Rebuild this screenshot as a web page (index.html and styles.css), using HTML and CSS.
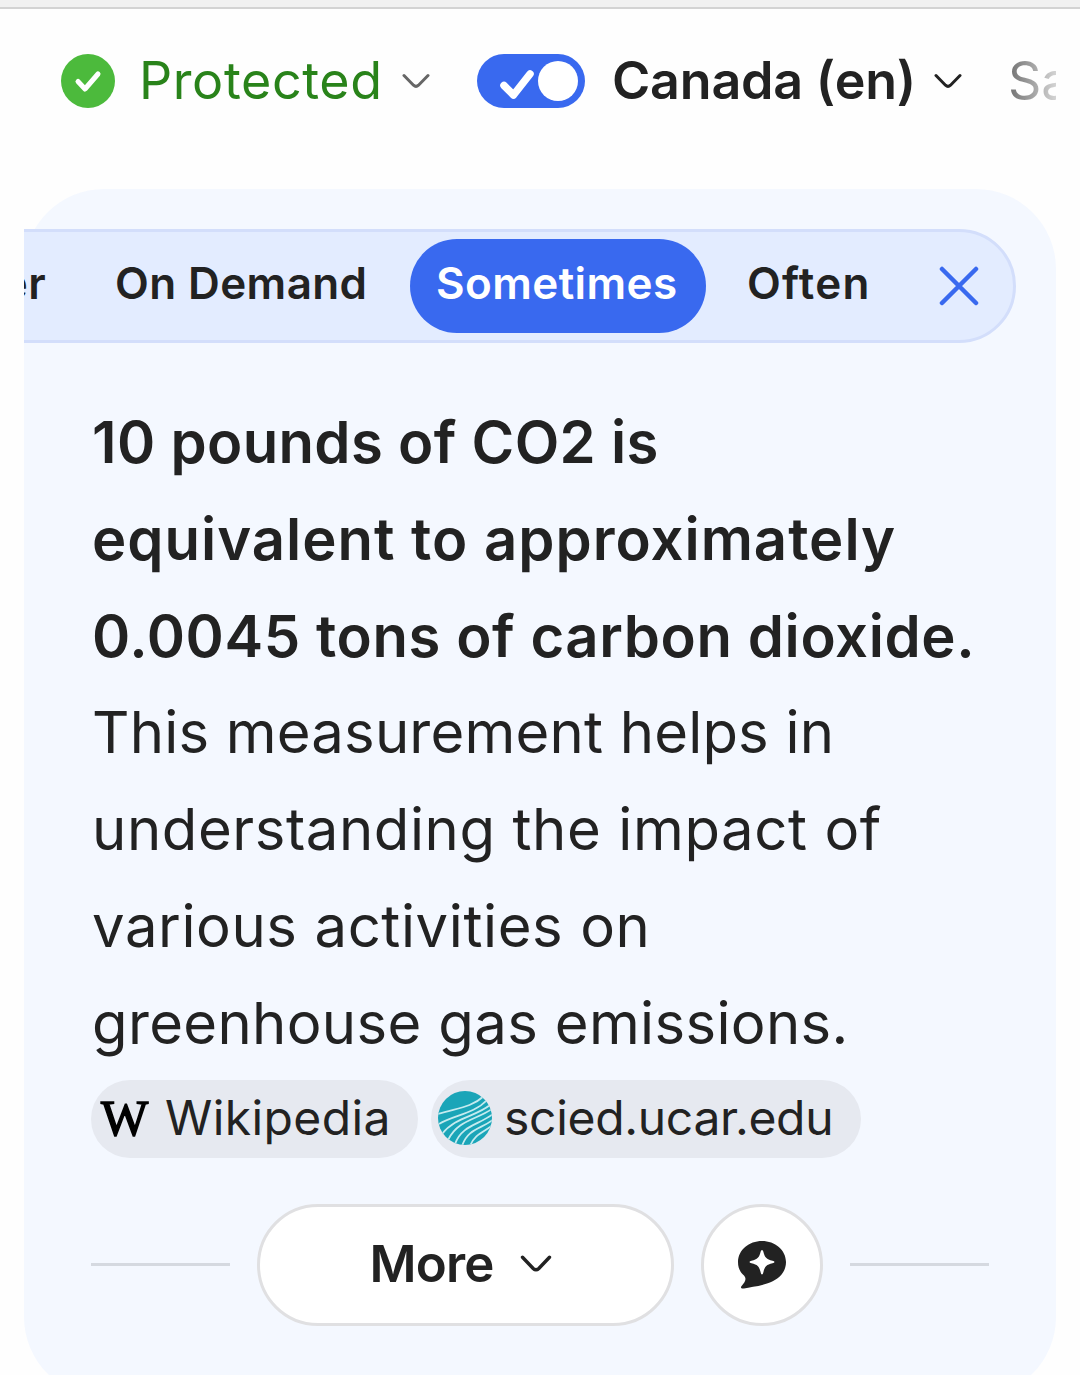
FILE: index.html
```html
<!DOCTYPE html>
<html lang="en-CA">
<head>
    <meta charset="UTF-8">
    <meta name="viewport" content="width=device-width, initial-scale=1.0">
    <title>10 pounds of CO2 in tons</title>
    <link rel="stylesheet" href="styles.css">
</head>
<body>

    <div class="topbar"></div>

    <!-- Search filters -->
    <nav class="filters">
        <svg class="shield" viewBox="0 0 54 54">
            <circle cx="27" cy="27" r="27" fill="#4cba3c"/>
            <path d="M17 27.500l7 7.500L37 20" fill="none" stroke="#fff" stroke-width="5" stroke-linecap="round" stroke-linejoin="round"/>
        </svg>
        <span class="protected">Protected</span>
        <svg class="chevron grey" viewBox="0 0 28 16"><path d="M2 2.500l9.500 9.700q2.500 2.300 5 0L26 2.500"/></svg>
        <svg class="toggle" viewBox="0 0 108 54">
            <rect width="108" height="54" rx="27" fill="#3969ef"/>
            <path d="M27 31.500l9.500 9.500L53 20" fill="none" stroke="#fff" stroke-width="7.500" stroke-linecap="round" stroke-linejoin="round"/>
            <circle cx="81" cy="27" r="23" fill="#3969ef"/>
            <circle cx="81" cy="27" r="20" fill="#fff"/>
        </svg>
        <span class="region">Canada (en)</span>
        <svg class="chevron" viewBox="0 0 28 16"><path d="M2 2.500l9.500 9.700q2.500 2.300 5 0L26 2.500"/></svg>
        <span class="safe">Safe search</span>
    </nav>

    <!-- Search Assist -->
    <main class="card">
        <div class="scroller">
            <div class="tabs">
                <span class="tab never">Never</span>
                <span class="tab demand">On Demand</span>
                <span class="tab active">Sometimes</span>
                <span class="tab often">Often</span>
                <svg class="close" viewBox="0 0 40 40"><path d="M3 3l34 34M37 3L3 37"/></svg>
            </div>
        </div>

        <p class="answer">
            <b>10 pounds of CO2 is</b><br>
            <b class="wider">equivalent to approximately</b><br>
            <b class="wide">0.0045 tons of carbon dioxide.</b><br>
            <span class="tight">This measurement helps in</span><br>
            <span class="wide">understanding the impact of</span><br>
            <span class="wide">various activities on</span><br>
            <span>greenhouse gas emissions.</span>
        </p>

        <div class="sources">
            <a class="source wiki"><span class="wiki-icon">W</span><span>Wikipedia</span></a>
            <a class="source ucar">
                <svg class="ucar-icon" viewBox="0 0 54 54">
                    <clipPath id="disc"><circle cx="27" cy="27" r="27"/></clipPath>
                    <g clip-path="url(#disc)">
                        <rect width="54" height="54" fill="#1aa5b8"/>
                        <g fill="none" stroke="#c5ebef" stroke-width="1.800">
                            <path d="M0 23C18 17 33 17 46 5"/>
                            <path d="M1 33C16 24 36 23 49 9"/>
                            <path d="M4 43C17 26 37 26 52 14"/>
                            <path d="M10 49C20 29 38 29 54 18"/>
                            <path d="M17 53C24 34 41 34 55 23"/>
                            <path d="M24 55C30 37 44 38 56 28"/>
                            <path d="M32 55C37 42 47 41 56 33"/>
                        </g>
                    </g>
                </svg>
                <span>scied.ucar.edu</span>
            </a>
        </div>

        <div class="actions">
            <span class="line"></span>
            <button class="more">
                <span>More</span>
                <svg class="chevron" viewBox="0 0 28 16"><path d="M2 2l9.500 10q2.500 2.500 5 0L26 2"/></svg>
            </button>
            <button class="chat">
                <svg viewBox="0 0 48 48">
                    <path fill="#222" d="M24 0C37 0 48 9 48 21C48 32 40 39 29 42.500C20 45.500 12 46 6 47.500C3 48 2 46.500 4 44.500C7 41 9 38 6 34.500C2 31 0 27 0 21C0 9 11 0 24 0Z"/>
                    <path fill="#fff" d="M24 9q1 0 1.300 1.500c1.400 6 3.200 7.800 9.200 9.200q2 .4 2 1.300t-2 1.300c-6 1.400-7.800 3.200-9.200 9.200q-.3 2-1.300 2t-1.300-2c-1.400-6-3.200-7.800-9.200-9.200q-2-.4-2-1.300t2-1.300c6-1.400 7.800-3.200 9.200-9.200Q23 9 24 9z"/>
                </svg>
            </button>
            <span class="line"></span>
        </div>
    </main>

</body>
</html>
```

FILE: styles.css
```css
* {
    box-sizing: border-box;
}
body {
    margin: 0;
    height: 1375px;
    overflow: hidden;
    background-color: #fefefe;
    color: #222;
    font-family: Inter, "Liberation Sans", sans-serif;
}
svg {
    display: block;
    flex: none;
}
.topbar {
    height: 9px;
    background-color: #f1f1f1;
    border-bottom: 2px solid #d3d3d3;
}
.filters {
    display: flex;
    align-items: center;
    height: 144px;
    margin: 0 24px 36px;
    padding-left: 37px;
    overflow: hidden;
    font-size: 52px;
    white-space: nowrap;
}
.filters span {
    flex: none;
    line-height: 60px;
}
.shield {
    width: 54px;
    height: 54px;
}
.protected {
    width: 263px;
    padding-left: 24px;
    color: #29831a;
    letter-spacing: 0.6px;
}
.chevron {
    width: 28px;
    height: 16px;
    fill: none;
    stroke: #222;
    stroke-width: 3;
    stroke-linecap: round;
}
.filters .chevron {
    margin-left: 24px;
}
.filters .grey {
    stroke: #666;
}
.toggle {
    width: 108px;
    height: 54px;
    margin-left: 47px;
}
.region {
    width: 298px;
    margin-left: 27px;
    font-weight: 600;
    letter-spacing: -0.2px;
}
.safe {
    margin-left: 46px;
    color: transparent;
    background: linear-gradient(90deg, #707070, #d8d8d8 50px);
    background-clip: text;
    -webkit-background-clip: text;
}
.card {
    height: 1208px;
    margin: 0 24px;
    padding-top: 40px;
    border-radius: 80px;
    background-color: #f4f8ff;
}
.scroller {
    display: flex;
    justify-content: flex-end;
    width: 992px;
    overflow: hidden;
}
.tabs {
    display: flex;
    flex: none;
    align-items: center;
    width: 1200px;
    height: 114px;
    padding-right: 34px;
    justify-content: flex-end;
    border: 3px solid #d3defb;
    border-radius: 57px;
    background-color: #e3ecff;
    font-size: 44px;
    font-weight: 600;
    line-height: 88px;
    letter-spacing: 0.4px;
    white-space: nowrap;
}
.tab {
    height: 94px;
}
.never {
    margin-right: 69px;
}
.demand {
    width: 253px;
    margin-right: 42px;
}
.active {
    width: 296px;
    padding-left: 26px;
    border-radius: 47px;
    background-color: #3969ef;
    color: #fff;
}
.often {
    width: 123px;
    margin-left: 41px;
    letter-spacing: 1.3px;
}
.close {
    width: 40px;
    height: 40px;
    margin-left: 69px;
    fill: none;
    stroke: #3969ef;
    stroke-width: 4.5;
    stroke-linecap: round;
}
.answer {
    margin: 51px 0 0;
    padding-left: 68px;
    font-size: 58px;
    line-height: 96.8px;
    letter-spacing: 0.35px;
    white-space: nowrap;
}
.answer b {
    font-weight: 600;
}
.answer .tight {
    letter-spacing: 0.2px;
}
.answer .wide {
    letter-spacing: 0.6px;
}
.answer .wider {
    letter-spacing: 1px;
}
.sources {
    display: flex;
    gap: 13px;
    margin: 8px 0 0 67px;
}
.source {
    display: flex;
    align-items: center;
    height: 78px;
    padding-bottom: 1px;
    border-radius: 39px;
    background-color: #e6e9f0;
    font-size: 48px;
    line-height: 74px;
    white-space: nowrap;
}
.wiki {
    width: 327px;
    padding-left: 10px;
    letter-spacing: 0.4px;
}
.wiki-icon {
    width: 64px;
    color: #000;
    font-family: "Liberation Serif", serif;
    font-size: 50px;
    -webkit-text-stroke: 1.5px #000;
}
.ucar {
    width: 430px;
    padding-left: 7px;
    letter-spacing: -0.3px;
}
.ucar-icon {
    width: 54px;
    height: 54px;
    margin-right: 12px;
}
.actions {
    display: flex;
    align-items: center;
    margin: 46px 67px 0;
}
.line {
    flex: 1;
    height: 3px;
    background-color: #d5d9e0;
}
.more, .chat {
    display: flex;
    align-items: center;
    justify-content: center;
    height: 122px;
    padding: 0;
    border: 3px solid #e0e0e2;
    border-radius: 61px;
    background-color: #fff;
    color: #222;
    font: 600 51px/100px Inter, sans-serif;
}
.more {
    width: 417px;
    margin: 0 27px;
    padding: 0 10px 2px 0;
    letter-spacing: -0.8px;
}
.more .chevron {
    width: 32px;
    height: 18px;
    margin-left: 26px;
}
.chat {
    width: 122px;
    margin-right: 27px;
}
.chat svg {
    width: 48px;
    height: 48px;
}
```
